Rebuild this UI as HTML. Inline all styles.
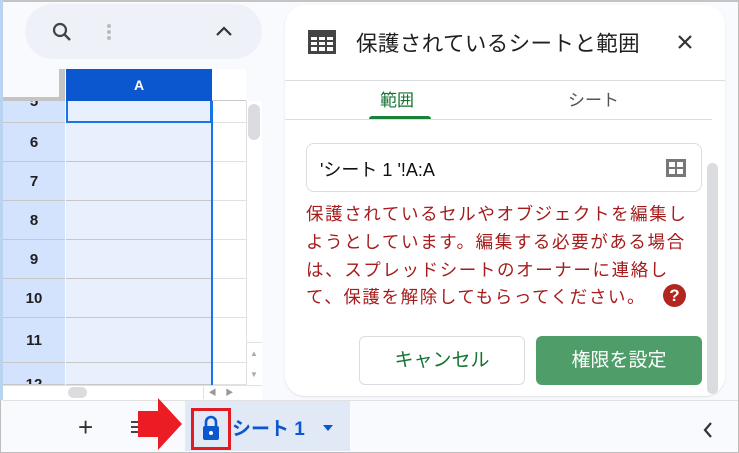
<!DOCTYPE html>
<html><head><meta charset="utf-8"><style>
*{margin:0;padding:0;box-sizing:border-box}
body{width:739px;height:453px;position:relative;overflow:hidden;background:#f8fafd;font-family:"Liberation Sans","Noto Sans CJK JP",sans-serif}
.a{position:absolute}
.rh{position:absolute;left:3px;width:62px;background:#d3e3fd;border-bottom:1px solid #c7c7c7;font-weight:bold;font-size:15px;color:#1f1f1f;text-align:center}
.rc{position:absolute;left:66px;width:146px;background:#e8f0fe;border-bottom:1px solid #c7c7c7}
.rx{position:absolute;left:212px;width:34px;background:#fff;border-bottom:1px solid #e1e1e1}
.et{position:absolute;left:306px;font-size:17.5px;color:#a61b1b;white-space:nowrap;letter-spacing:1.6px}
</style></head><body>
<div class="a" style="left:0;top:0;width:739px;height:453px;border:1px solid #bdbdbd;border-top:2px solid #c4c4c4"></div>
<div class="a" style="left:0;top:0;width:3px;height:400px;background:#b8d4f0"></div>
<div class="a" style="left:25px;top:4px;width:237px;height:55px;border-radius:28px;background:#eef2f8"></div>
<svg class="a" style="left:50px;top:20px" width="24" height="24" viewBox="0 0 24 24"><circle cx="10" cy="10" r="6" fill="none" stroke="#444" stroke-width="2.2"/><path d="M14.5 14.5L20 20" stroke="#444" stroke-width="2.4"/></svg>
<div class="a" style="left:107px;top:24px;width:4px;height:4px;border-radius:2px;background:#bbb;box-shadow:0 6px 0 #bbb,0 12px 0 #bbb"></div>
<svg class="a" style="left:214px;top:24px" width="20" height="14" viewBox="0 0 20 14"><path d="M3 11L10 4L17 11" fill="none" stroke="#333" stroke-width="2.2"/></svg>
<div class="a" style="left:3px;top:69px;width:62px;height:32px;background:#f8fafd;border-right:6px solid #c4c4c4;border-bottom:4px solid #c4c4c4"></div>
<div class="a" style="left:66px;top:69px;width:146px;height:32px;background:#0b57d0;color:#fff;font-weight:bold;font-size:14px;text-align:center;line-height:32px">A</div>
<div class="a" style="left:212px;top:69px;width:34px;height:32px;background:#fff;border-bottom:1px solid #c7c7c7"></div>
<div class="rh" style="top:101px;height:22px;line-height:2px;overflow:hidden">5</div>
<div class="rc" style="top:101px;height:22px;border:2px solid #1a73e8;border-top:none"></div>
<div class="rx" style="top:101px;height:22px"></div>
<div class="rh" style="top:123px;height:39px;line-height:39px">6</div><div class="rc" style="top:123px;height:39px"></div><div class="rx" style="top:123px;height:39px"></div>
<div class="rh" style="top:162px;height:39px;line-height:39px">7</div><div class="rc" style="top:162px;height:39px"></div><div class="rx" style="top:162px;height:39px"></div>
<div class="rh" style="top:201px;height:39px;line-height:39px">8</div><div class="rc" style="top:201px;height:39px"></div><div class="rx" style="top:201px;height:39px"></div>
<div class="rh" style="top:240px;height:39px;line-height:39px">9</div><div class="rc" style="top:240px;height:39px"></div><div class="rx" style="top:240px;height:39px"></div>
<div class="rh" style="top:279px;height:39px;line-height:39px">10</div><div class="rc" style="top:279px;height:39px"></div><div class="rx" style="top:279px;height:39px"></div>
<div class="rh" style="top:318px;height:45px;line-height:45px">11</div><div class="rc" style="top:318px;height:45px"></div><div class="rx" style="top:318px;height:45px"></div>
<div class="rh" style="top:363px;height:22px;line-height:44px;overflow:hidden">12</div><div class="rc" style="top:363px;height:22px"></div><div class="rx" style="top:363px;height:22px"></div>
<div class="a" style="left:211px;top:101px;width:2px;height:284px;background:#1a73e8"></div>
<div class="a" style="left:246px;top:101px;width:16px;height:284px;background:#fff;border-left:1px solid #e1e1e1"></div>
<div class="a" style="left:248px;top:104px;width:12px;height:36px;border-radius:6px;background:#dadce0"></div>
<div class="a" style="left:246px;top:342px;width:16px;height:43px;border-top:1px solid #e1e1e1;color:#aaa;font-size:8px;text-align:center;line-height:21px">▲<br>▼</div>
<div class="a" style="left:3px;top:385px;width:259px;height:15px;background:#fff;border-top:1px solid #e1e1e1"></div>
<div class="a" style="left:68px;top:387px;width:19px;height:11px;border-radius:6px;background:#dadce0"></div>
<div class="a" style="left:203px;top:386px;width:44px;height:13px;color:#999;font-size:8px;line-height:13px;border-left:1px solid #e1e1e1">&nbsp;&nbsp;◀&nbsp;&nbsp;&nbsp;&nbsp;▶</div>
<div class="a" style="left:3px;top:400px;width:735px;height:1px;background:#e1e1e1"></div>
<div class="a" style="left:78px;top:412px;font-size:26px;color:#333;line-height:30px">+</div>
<div class="a" style="left:131px;top:421px;width:14px;height:2px;background:#444;box-shadow:0 5px 0 #444,0 10px 0 #444"></div>
<div class="a" style="left:185px;top:401px;width:165px;height:50px;background:#e1e9f7"></div>
<svg class="a" style="left:138px;top:397px" width="46" height="54" viewBox="0 0 46 54"><path d="M0 14H20V1L44 27L20 53V40H0Z" fill="#ec1c24"/></svg>
<div class="a" style="left:191px;top:408px;width:40px;height:42px;border:3px solid #e21b22"></div>
<svg class="a" style="left:201px;top:414px" width="20" height="28" viewBox="0 0 20 28"><path d="M5 12V8a5 5 0 0 1 10 0v4" fill="none" stroke="#0b57d0" stroke-width="2.6"/><rect x="2" y="12" width="16" height="14" rx="2" fill="#0b57d0"/><circle cx="10" cy="19" r="2" fill="#fff"/></svg>
<div class="a" style="left:232px;top:414px;font-size:19px;font-weight:bold;color:#0b57d0;white-space:nowrap">シート 1</div>
<svg class="a" style="left:322px;top:424px" width="12" height="8"><path d="M1 1H11L6 7Z" fill="#0b57d0"/></svg>
<svg class="a" style="left:702px;top:421px" width="12" height="18"><path d="M9 2L3 9L9 16" fill="none" stroke="#333" stroke-width="2.2"/></svg>
<div class="a" style="left:285px;top:5px;width:440px;height:391px;background:#fff;border-radius:20px;box-shadow:0 1px 2px rgba(0,0,0,.1)"></div>
<svg class="a" style="left:308px;top:30px" width="28" height="24" viewBox="0 0 28 24"><rect x="0" y="0" width="28" height="24" fill="#444"/><g fill="#fff"><rect x="3" y="7" width="6" height="3"/><rect x="11" y="7" width="6" height="3"/><rect x="19" y="7" width="6" height="3"/><rect x="3" y="12" width="6" height="3"/><rect x="11" y="12" width="6" height="3"/><rect x="19" y="12" width="6" height="3"/><rect x="3" y="17" width="6" height="4"/><rect x="11" y="17" width="6" height="4"/><rect x="19" y="17" width="6" height="4"/></g></svg>
<div class="a" style="left:356px;top:27px;font-size:21.5px;color:#1f1f1f;white-space:nowrap;letter-spacing:0.4px">保護されているシートと範囲</div>
<svg class="a" style="left:677px;top:34px" width="16" height="16"><path d="M2 2L14 14M14 2L2 14" stroke="#333" stroke-width="2.2"/></svg>
<div class="a" style="left:285px;top:80px;width:440px;height:1px;background:#dadce0"></div>
<div class="a" style="left:380px;top:86px;font-size:17px;color:#137333">範囲</div>
<div class="a" style="left:568px;top:86px;font-size:17px;color:#555">シート</div>
<div class="a" style="left:369px;top:116px;width:62px;height:4px;border-radius:3px 3px 0 0;background:#188038"></div>
<div class="a" style="left:285px;top:119px;width:427px;height:1px;background:#dadce0"></div>
<div class="a" style="left:306px;top:143px;width:396px;height:49px;border:1px solid #dadce0;border-radius:8px"></div>
<div class="a" style="left:320px;top:156px;font-size:18px;color:#111;white-space:nowrap">'シート 1 '!A:A</div>
<svg class="a" style="left:665px;top:158px" width="22" height="20" viewBox="0 0 22 20"><rect x="1" y="1" width="20" height="18" fill="#777"/><g fill="#fff"><rect x="4" y="4" width="6" height="5"/><rect x="12" y="4" width="6" height="5"/><rect x="4" y="11" width="6" height="5"/><rect x="12" y="11" width="6" height="5"/></g></svg>
<div class="a" style="left:707px;top:163px;width:11px;height:231px;border-radius:6px;background:#dadce0"></div>
<div class="et" style="top:201px">保護されているセルやオブジェクトを編集し</div>
<div class="et" style="top:229px">ようとしています。編集する必要がある場合</div>
<div class="et" style="top:257px">は、スプレッドシートのオーナーに連絡し</div>
<div class="et" style="top:284px">て、保護を解除してもらってください。</div>
<div class="a" style="left:663px;top:284px;width:23px;height:23px;border-radius:50%;background:#b3261e;color:#fff;font-weight:bold;font-size:17px;text-align:center;line-height:23px">?</div>
<div class="a" style="left:359px;top:336px;width:166px;height:49px;border:1px solid #dadce0;border-radius:6px;color:#137333;font-size:19px;text-align:center;line-height:47px">キャンセル</div>
<div class="a" style="left:536px;top:336px;width:166px;height:49px;background:#4f9d69;border-radius:6px;color:#fff;font-size:19px;text-align:center;line-height:49px">権限を設定</div>
</body></html>
